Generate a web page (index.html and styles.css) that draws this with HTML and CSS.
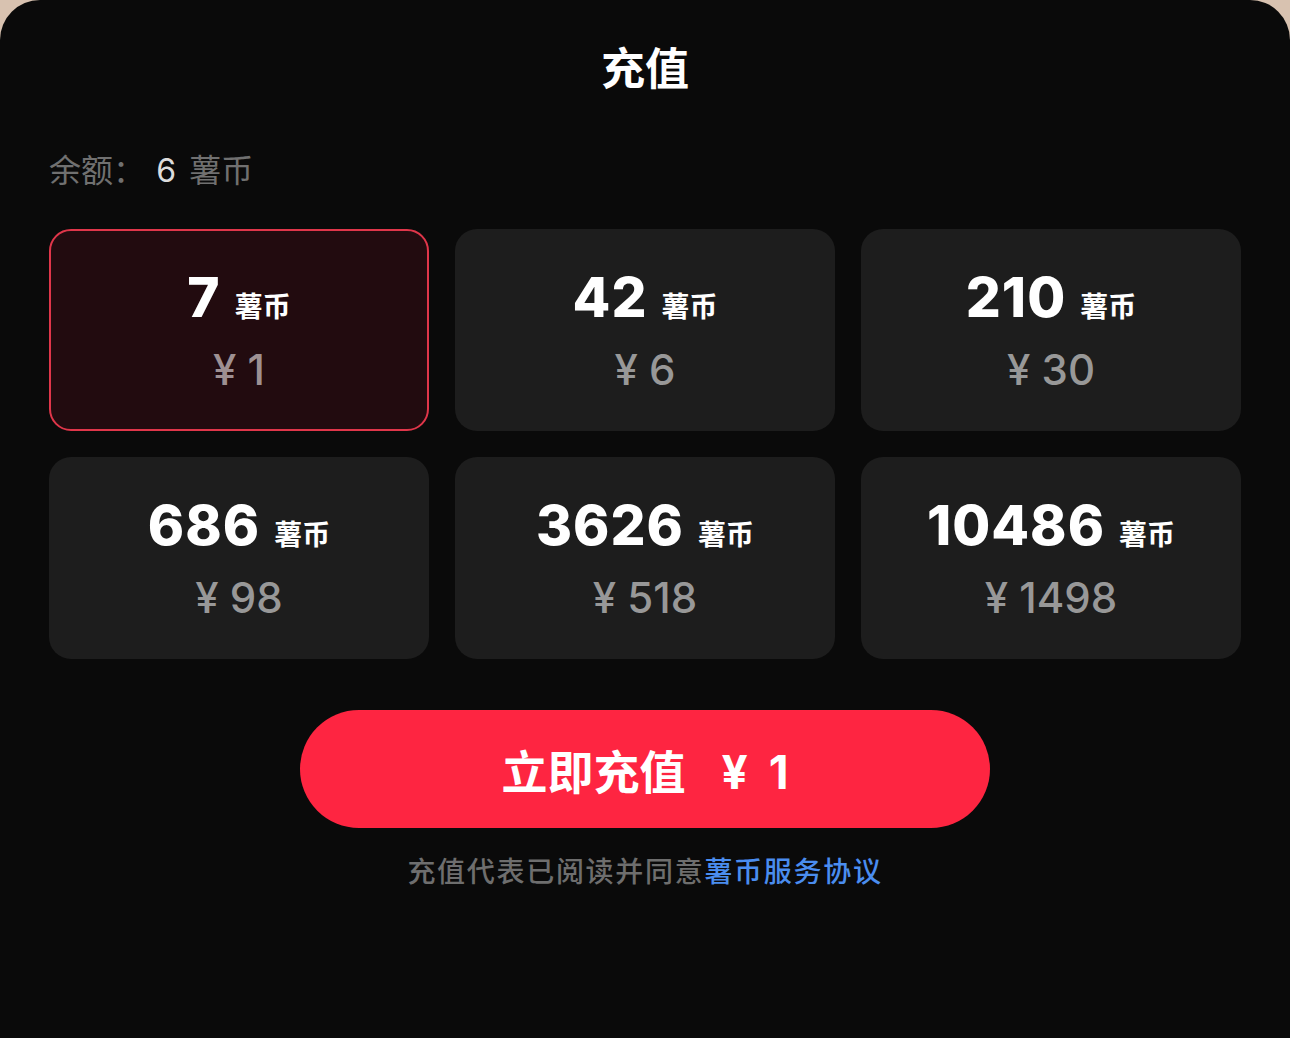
FILE: index.html
```html
<!DOCTYPE html>
<html lang="zh-CN">
<head>
    <meta charset="UTF-8">
    <meta name="viewport" content="width=device-width, initial-scale=1.0">
    <title>充值</title>
    <link rel="stylesheet" href="styles.css">
</head>
<body>
    <!-- Recharge sheet -->
    <div class="sheet">
        <h1 class="title">充值</h1>

        <div class="balance">
            <span class="balance-label">余额：</span>
            <span class="balance-num">6</span>
            <span class="balance-unit">薯币</span>
        </div>

        <div class="plans">
            <div class="plan active">
                <div class="coins"><span class="num">7</span><span class="unit">薯币</span></div>
                <div class="price">¥ 1</div>
            </div>
            <div class="plan">
                <div class="coins"><span class="num">42</span><span class="unit">薯币</span></div>
                <div class="price">¥ 6</div>
            </div>
            <div class="plan">
                <div class="coins"><span class="num">210</span><span class="unit">薯币</span></div>
                <div class="price">¥ 30</div>
            </div>
            <div class="plan">
                <div class="coins"><span class="num">686</span><span class="unit">薯币</span></div>
                <div class="price">¥ 98</div>
            </div>
            <div class="plan">
                <div class="coins"><span class="num">3626</span><span class="unit">薯币</span></div>
                <div class="price">¥ 518</div>
            </div>
            <div class="plan">
                <div class="coins"><span class="num">10486</span><span class="unit">薯币</span></div>
                <div class="price">¥ 1498</div>
            </div>
        </div>

        <button class="pay-btn">立即充值<span class="pay-amount">¥ 1</span></button>

        <p class="agree">充值代表已阅读并同意<a href="#">薯币服务协议</a></p>
    </div>
</body>
</html>
```

FILE: styles.css
```css
body {
    margin: 0;
    padding: 0;
    background: #d8c2b0;
    font-family: 'Inter', 'Noto Sans CJK SC', sans-serif;
    overflow: hidden;
}

.sheet {
    background: #0a0a0a;
    border-radius: 40px 40px 0 0;
    height: 1038px;
    padding: 0 49px;
    box-sizing: border-box;
    color: white;
}

.title {
    margin: 0;
    padding-top: 36px;
    text-align: center;
    font-family: 'Noto Sans CJK SC', sans-serif;
    font-size: 44px;
    font-weight: 700;
    line-height: 60px;
}

.balance {
    margin-top: 50px;
    font-family: 'Noto Sans CJK SC', sans-serif;
    font-size: 32px;
    line-height: 44px;
    color: #707070;
}

.balance-num {
    font-family: 'Inter', sans-serif;
    color: #dcdcdc;
    margin: 0 6px 0 4px;
}

/* Plan grid */
.plans {
    display: grid;
    grid-template-columns: repeat(3, 1fr);
    gap: 26px;
    margin-top: 36px;
}

.plan {
    height: 202px;
    box-sizing: border-box;
    background: #1d1d1d;
    border-radius: 22px;
    display: flex;
    flex-direction: column;
    align-items: center;
    justify-content: center;
    border: 2px solid transparent;
}

.plan.active {
    background: #220b0f;
    border-color: #e0364a;
}

.coins {
    display: flex;
    align-items: baseline;
    gap: 14px;
    line-height: 60px;
    margin-top: 2px;
}

.num {
    font-size: 55px;
    font-weight: 800;
    letter-spacing: 1px;
}

.unit {
    font-family: 'Noto Sans CJK SC', sans-serif;
    font-size: 28px;
    font-weight: 700;
}

.price {
    margin-top: 10px;
    font-size: 42px;
    font-weight: 500;
    line-height: 50px;
    color: #989898;
}

.plan.active .price {
    color: #9e9092;
}

/* Pay button */
.pay-btn {
    display: block;
    width: 690px;
    height: 118px;
    margin: 51px auto 0;
    border: none;
    border-radius: 59px;
    background: #fe2541;
    color: white;
    font-family: 'Noto Sans CJK SC', sans-serif;
    font-size: 46px;
    font-weight: 700;
    cursor: pointer;
}

.pay-amount {
    font-family: 'Inter', sans-serif;
    margin-left: 36px;
    word-spacing: 10px;
}

.agree {
    margin: 22px 0 0;
    text-align: center;
    font-family: 'Noto Sans CJK SC', sans-serif;
    font-size: 28px;
    font-weight: 500;
    letter-spacing: 1.7px;
    line-height: 40px;
    color: #6e6e6e;
}

.agree a {
    color: #4a8def;
    text-decoration: none;
}
```
